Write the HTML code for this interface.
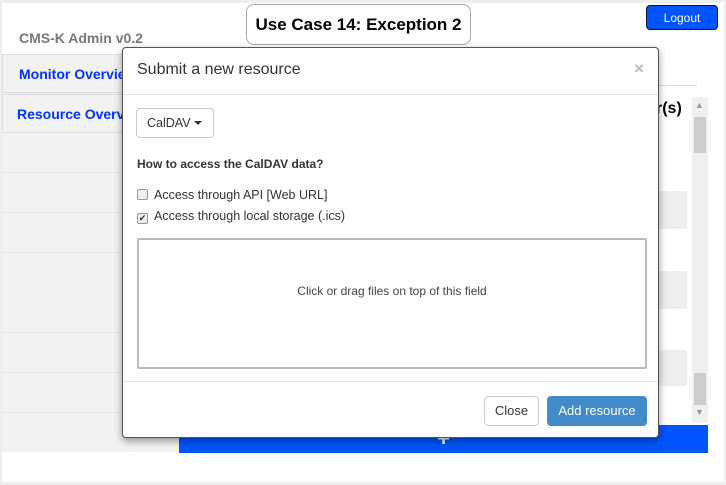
<!DOCTYPE html>
<html><head><style>
*{box-sizing:border-box;margin:0;padding:0}
body{width:726px;height:485px;background:#eee;font-family:"Liberation Sans",Arial,sans-serif;position:relative;overflow:hidden}
.abs{position:absolute}
</style></head><body>
<div class="abs" style="left:2px;top:3px;width:722px;height:479px;background:#fff"></div>
<div class="abs" style="left:19px;top:30px;font-size:14px;font-weight:bold;color:#777">CMS-K Admin v0.2</div>
<div class="abs" style="left:246px;top:4px;width:225px;height:41px;border:1px solid #aaa;border-radius:8px;background:#fff;font-size:17px;font-weight:bold;text-align:center;line-height:40px">Use Case 14: Exception 2</div>
<div class="abs" style="left:646px;top:5px;width:72px;height:25px;background:#0055ff;border:1px solid #112;border-radius:4px;color:#fff;font-size:12px;text-align:center;line-height:24px">Logout</div>
<div class="abs" style="left:2px;top:54px;width:177px;height:398px;background:#f2f2f2"></div>
<div class="abs" style="left:2px;top:54px;width:177px;height:39px;border:1px solid #ddd;background:#f2f2f2;color:#0033ff;font-weight:bold;font-size:14px;padding:11px 16px;white-space:nowrap">Monitor Overview</div>
<div class="abs" style="left:2px;top:94px;width:177px;height:39px;border:1px solid #ddd;background:#f2f2f2;color:#0033ff;font-weight:bold;font-size:14px;padding:11px 14px;white-space:nowrap">Resource Overview</div>
<div class="abs" style="left:2px;top:172px;width:120px;height:1px;background:#e6e6e6"></div>
<div class="abs" style="left:2px;top:212px;width:120px;height:1px;background:#e6e6e6"></div>
<div class="abs" style="left:2px;top:252px;width:120px;height:1px;background:#e6e6e6"></div>
<div class="abs" style="left:2px;top:332px;width:120px;height:1px;background:#e6e6e6"></div>
<div class="abs" style="left:2px;top:372px;width:120px;height:1px;background:#e6e6e6"></div>
<div class="abs" style="left:2px;top:412px;width:120px;height:1px;background:#e6e6e6"></div>
<div class="abs" style="left:659px;top:85px;width:38px;height:1px;background:#ddd"></div>
<div class="abs" style="left:656px;top:100px;font-size:16px;font-weight:bold">r(s)</div>
<div class="abs" style="left:659px;top:191px;width:28px;height:38px;background:#eee"></div>
<div class="abs" style="left:659px;top:271px;width:28px;height:38px;background:#eee"></div>
<div class="abs" style="left:659px;top:350px;width:28px;height:36px;background:#eee"></div>
<div class="abs" style="left:692px;top:97px;width:16px;height:326px;background:#f0f0f0"></div>
<div class="abs" style="left:694px;top:117px;width:12px;height:36px;background:#cdcdcd"></div>
<div class="abs" style="left:694px;top:373px;width:12px;height:32px;background:#cdcdcd"></div>
<div class="abs" style="left:695px;top:100px;font-size:9px;color:#999">▲</div>
<div class="abs" style="left:695px;top:407px;font-size:9px;color:#999">▼</div>
<div class="abs" style="left:179px;top:425px;width:529px;height:28px;background:#0055ff;color:#fff;font-size:22px;font-weight:bold;text-align:center;line-height:28px">+</div>
<div class="abs" style="left:122px;top:47px;width:537px;height:391px;background:#fff;border:1px solid #555;border-radius:4px;box-shadow:0 3px 8px rgba(0,0,0,.4)">
 <div style="height:47px;border-bottom:1px solid #e5e5e5;padding:13px 14px;font-size:16px;color:#333;position:relative">Submit a new resource<span style="position:absolute;right:14px;top:11px;color:#bbb;font-weight:bold;font-size:17px">×</span></div>
 <div style="position:absolute;left:13px;top:60px;width:78px;height:30px;border:1px solid #ccc;border-radius:4px;font-size:12.5px;color:#333;padding:7px 10px;white-space:nowrap">CalDAV <span style="display:inline-block;width:0;height:0;border-left:4px solid transparent;border-right:4px solid transparent;border-top:4px solid #333;vertical-align:2px"></span></div>
 <div style="position:absolute;left:14px;top:109px;font-size:12px;font-weight:bold;color:#333">How to access the CalDAV data?</div>
 <div style="position:absolute;left:14px;top:140px;font-size:12.5px;color:#333"><span style="display:inline-block;width:11px;height:11px;border:1px solid #999;border-radius:2px;background:#eee;vertical-align:-1px;margin-right:6px"></span>Access through API [Web URL]</div>
 <div style="position:absolute;left:14px;top:161px;font-size:12.5px;color:#333"><span style="display:inline-block;width:11px;height:11px;border:1px solid #999;border-radius:2px;background:#eee;vertical-align:-1px;margin-right:6px;font-size:9px;line-height:9px;text-align:center">✔</span>Access through local storage (.ics)</div>
 <div style="position:absolute;left:14px;top:190px;width:510px;height:131px;border:2px solid #bbb;border-radius:2px;text-align:center;line-height:100px;font-size:12px;color:#444;padding-top:1px">Click or drag files on top of this field</div>
 <div style="position:absolute;left:0;top:333px;width:535px;height:1px;background:#e5e5e5"></div>
 <div style="position:absolute;left:361px;top:348px;width:55px;height:30px;border:1px solid #ccc;border-radius:4px;font-size:13px;color:#333;text-align:center;line-height:28px">Close</div>
 <div style="position:absolute;left:424px;top:348px;width:100px;height:30px;background:#428bca;border-radius:4px;font-size:13px;color:#fff;text-align:center;line-height:30px">Add resource</div>
</div>
</body></html>
